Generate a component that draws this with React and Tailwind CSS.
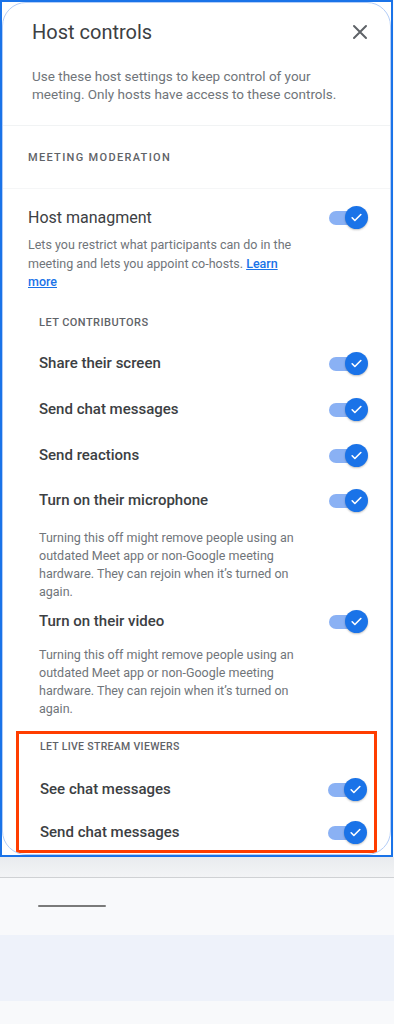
import React from 'react';

const font = { fontFamily: 'Roboto, "Open Sans", Arial, sans-serif' };

function Toggle() {
    return (
        <div className="relative w-[40px] h-[24px] shrink-0">
            <div className="absolute left-[1px] top-[5px] w-[36px] h-[14px] rounded-full bg-[#8ab1f4]" />
            <div className="absolute right-0 top-0 w-[23px] h-[23px] rounded-full bg-[#1a73e8] flex items-center justify-center shadow-[0_1px_2px_rgba(0,0,0,0.25)]">
                <svg width="13" height="13" viewBox="0 0 24 24" fill="none" stroke="white" strokeWidth="3" strokeLinecap="round" strokeLinejoin="round">
                    <path d="M4 12.5l5 5L20 6.5" />
                </svg>
            </div>
        </div>
    );
}

function Row({ label, className = '' }) {
    return (
        <div className={`flex items-center justify-between h-[24px] ${className}`}>
            <span className="text-[15px] font-medium text-[#3c4043]">{label}</span>
            <Toggle />
        </div>
    );
}

function Note({ className = '' }) {
    return (
        <p className={`max-w-[262px] text-[12.5px] leading-[18px] text-[#70757a] ${className}`}>
            Turning this off might remove people using an outdated Meet app or non-Google meeting hardware. They can rejoin when it’s turned on again.
        </p>
    );
}

export default function App() {
    return (
        <div className="w-[394px] h-[1024px] bg-[#f8f9fb] flex flex-col" style={font}>
            <div className="h-[857px] w-[393px] border-2 border-[#1a73e8] bg-white overflow-hidden">
                <div className="h-full rounded-[24px] border border-[#b3cdf7] overflow-hidden">
                    {/* header */}
                    <div className="pl-[29px] pr-[22px] pt-[15px]">
                        <div className="flex items-center justify-between h-[28px]">
                            <h1 className="text-[20px] text-[#3c4043]">Host controls</h1>
                            <svg width="16" height="16" viewBox="0 0 16 16" stroke="#5f6368" strokeWidth="2" strokeLinecap="round">
                                <path d="M2 2l12 12M14 2L2 14" />
                            </svg>
                        </div>
                        <p className="mt-[21px] max-w-[325px] text-[13.5px] leading-[18px] text-[#70757a] pb-[22px]">
                            Use these host settings to keep control of your meeting. Only hosts have access to these controls.
                        </p>
                    </div>
                    <div className="h-px bg-[#f1f3f4]" />
                    <div className="pl-[25px] pt-[24px] pb-[22px]">
                        <div className="text-[11px] font-medium tracking-[0.12em] leading-[16px] text-[#5f6368]">MEETING MODERATION</div>
                    </div>
                    <div className="h-px bg-[#f5f6f7]" />
                    <div className="pl-[25px] pr-[22px] pt-[17px]">
                        <div className="flex items-center justify-between h-[24px]">
                            <span className="text-[16px] text-[#3c4043]">Host managment</span>
                            <Toggle />
                        </div>
                        <p className="mt-[6px] text-[12.5px] leading-[18.5px] text-[#70757a] pr-[70px]">
                            Lets you restrict what participants can do in the meeting and lets you appoint co-hosts.{' '}
                            <span className="text-[#1a73e8] font-medium underline underline-offset-1">Learn more</span>
                        </p>
                    </div>
                    <div className="pl-[36px] pr-[22px] pt-[23px]">
                        <div className="text-[11px] font-medium tracking-[0.04em] leading-[16px] text-[#5f6368]">LET CONTRIBUTORS</div>
                        <Row label="Share their screen" className="mt-[21px]" />
                        <Row label="Send chat messages" className="mt-[22px]" />
                        <Row label="Send reactions" className="mt-[22px]" />
                        <Row label="Turn on their microphone" className="mt-[21px]" />
                        <Note className="mt-[16px]" />
                        <Row label="Turn on their video" className="mt-[9px]" />
                        <Note className="mt-[12px]" />
                    </div>
                    <div className="mx-[13px] mt-[13px] h-[122px] border-[3px] border-[#ff3d00] pl-[21px] pr-[7px]">
                        <div className="mt-[5px] text-[10.5px] font-medium tracking-[0.03em] leading-[16px] text-[#5f6368]">LET LIVE STREAM VIEWERS</div>
                        <Row label="See chat messages" className="mt-[23px]" />
                        <Row label="Send chat messages" className="mt-[19px]" />
                    </div>
                </div>
            </div>
            <div className="h-[21px] bg-gradient-to-b from-[#e9ebee] to-[#f3f4f6] border-b border-[#cfd1d4]" />
            <div className="h-[57px] bg-[#f8f9fb] pl-[38px] pt-[27px]">
                <div className="w-[68px] h-[2px] bg-[#7a7a7a] rounded-full" />
            </div>
            <div className="h-[66px] bg-[#eef2fa]" />
            <div className="flex-1 bg-[#f8f9fb]" />
        </div>
    );
}
